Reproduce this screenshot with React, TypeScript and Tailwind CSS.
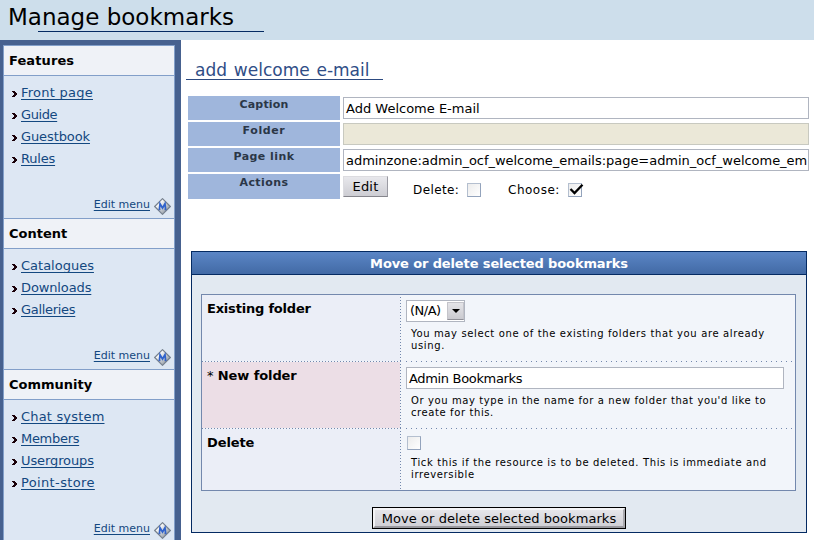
import React from "react";

function Chevron() {
  return (
    <svg width="6" height="6" viewBox="0 0 6 6" className="mt-[2px] shrink-0" shapeRendering="crispEdges">
      <path d="M0 0h3v1h1v1h1v2h-1v1h-1v1h-3v-1h1v-1h1v-2h-1v-1h-1z" fill="#1a0008" />
    </svg>
  );
}

function MenuBadge() {
  return (
    <svg width="17" height="17" viewBox="0 0 17 17" className="shrink-0">
      <defs>
        <linearGradient id="silver" x1="0" y1="0" x2="1" y2="1">
          <stop offset="0.25" stopColor="#ffffff" />
          <stop offset="0.75" stopColor="#a0a8b0" />
        </linearGradient>
      </defs>
      <path d="M8.5 0.7 16.3 8.5 8.5 16.3 0.7 8.5z" fill="url(#silver)" stroke="#76818e" strokeWidth="1.2" />
      <path d="M4.6 11.7H6.4M10.6 11.7H12.4" stroke="#2a56b8" strokeWidth="1" />
      <path d="M5.4 11.5 6 5.7 8.5 10 11 5.7 11.6 11.5" fill="none" stroke="#2f62cc" strokeWidth="1.7" />
    </svg>
  );
}

type MenuProps = { title: string; links: { label: string; track: string }[]; body: string; head: string };

function Menu({ title, links, body, head }: MenuProps) {
  return (
    <section>
      <h2 className={`flex h-[30px] items-center border-b border-[#829fc9] bg-[#eff2f7] pl-[5px] text-[13px] font-bold text-black ${head}`}>
        {title}
      </h2>
      <div className={`flex flex-col justify-between border-b border-[#829fc9] bg-[#dde7f3] ${body}`}>
        <ul className="flex flex-col pt-[6px] pl-2">
          {links.map((l) => (
            <li key={l.label} className="flex h-[22px] items-center gap-[3px]">
              <Chevron />
              <a className={`text-[13px] text-[#134880] underline underline-offset-2 ${l.track}`}>{l.label}</a>
            </li>
          ))}
        </ul>
        <div className="flex items-start justify-end gap-1 pr-[3px] pb-[3px]">
          <a className="text-[11px] leading-[14px] text-[#134880] underline underline-offset-2">Edit menu</a>
          <MenuBadge />
        </div>
      </div>
    </section>
  );
}

const field = "flex h-[22px] items-center overflow-hidden border px-[2px] text-[13px]";

function Check({ on = false }: { on?: boolean }) {
  return (
    <span className="flex h-[14px] w-[14px] shrink-0 border border-[#b4bfcf] border-r-[#93a3bc] border-b-[#93a3bc] bg-linear-to-br from-[#ececec] to-white">
      {on && (
        <svg width="15" height="12" viewBox="0 0 15 12" className="shrink-0">
          <path d="M1.5 5 5.5 9 13.5 0.8" fill="none" stroke="#000" strokeWidth="2.3" />
        </svg>
      )}
    </span>
  );
}

function Label({ children, track }: { children: React.ReactNode; track: string }) {
  return (
    <div className={`w-[152px] shrink-0 bg-[#9fb6dc] pt-[2px] text-center text-[11px] leading-[14px] font-bold text-[#2b3647] ${track}`}>
      {children}
    </div>
  );
}

function ColumnDots() {
  return <div className="mt-[2px] w-px shrink-0 bg-[repeating-linear-gradient(to_bottom,#7388ad_0px,#7388ad_1px,transparent_1px,transparent_3px)]" />;
}

function RowDots() {
  return (
    <div className="flex h-px shrink-0">
      <div className="w-[199px] bg-[repeating-linear-gradient(to_right,#7388ad_0px,#7388ad_1px,transparent_1px,transparent_3px)]" />
      <div className="mr-[3px] ml-[5px] flex-1 bg-[repeating-linear-gradient(to_right,#7388ad_0px,#7388ad_1px,transparent_1px,transparent_5px)]" />
    </div>
  );
}

const heading = "w-[198px] shrink-0 pt-[5px] pl-[5px] text-[13px] leading-[18px] font-bold";
const hint = "pl-[5px] text-[10px] leading-[12px]";

export default function App() {
  return (
    <div className="flex h-[540px] w-[814px] flex-col overflow-hidden bg-white font-['DejaVu_Sans',sans-serif] whitespace-nowrap text-black">
      <header className="h-10 shrink-0 bg-[#cddeeb]">
        <h1 className="pt-[3px] pl-2 text-[23px] leading-[28px]">Manage bookmarks</h1>
        <div className="ml-[38px] h-px w-[226px] bg-[#042a62]" />
      </header>
      <div className="flex min-h-0 flex-1">
        <aside className="w-[181px] shrink-0 overflow-hidden bg-[#46618f] pt-[5px] pl-[3px]">
          <div className="w-[172px] border border-b-0 border-[#829fc9]">
            <Menu
              title="Features"
              head="tracking-[0.1px]"
              body="h-[143px]"
              links={[
                { label: "Front page", track: "tracking-[0.25px]" },
                { label: "Guide", track: "tracking-[-0.4px]" },
                { label: "Guestbook", track: "tracking-[-0.1px]" },
                { label: "Rules", track: "tracking-[-0.2px]" },
              ]}
            />
            <Menu
              title="Content"
              head=""
              body="h-[121px]"
              links={[
                { label: "Catalogues", track: "" },
                { label: "Downloads", track: "tracking-[-0.12px]" },
                { label: "Galleries", track: "tracking-[-0.3px]" },
              ]}
            />
            <Menu
              title="Community"
              head=""
              body="h-[143px]"
              links={[
                { label: "Chat system", track: "tracking-[0.18px]" },
                { label: "Members", track: "tracking-[-0.3px]" },
                { label: "Usergroups", track: "tracking-[-0.1px]" },
                { label: "Point-store", track: "tracking-[0.36px]" },
              ]}
            />
          </div>
        </aside>
        <main className="min-w-0 flex-1 pl-[5px]">
          <h2 className="mt-5 h-5 w-[197px] border-b border-[#2c4a80] pl-[9px] text-[17px] leading-[21px] [word-spacing:1.4px] text-[#2f4d86]">add welcome e-mail</h2>
          <div className="mt-4 ml-[2px] flex w-[621px] flex-col gap-[2px]">
            <div className="flex h-6 gap-[3px]">
              <Label track="tracking-[0.2px]">Caption</Label>
              <div className={`${field} mt-px flex-1 border-[#b0b5c0] bg-white pt-px`}>Add Welcome E-mail</div>
            </div>
            <div className="flex h-6 gap-[3px]">
              <Label track="tracking-[0.6px]">Folder</Label>
              <div className={`${field} mt-px flex-1 border-[#c8c9c0] bg-[#ebe8d8]`} />
            </div>
            <div className="flex h-6 gap-[3px]">
              <Label track="tracking-[0.45px]">Page link</Label>
              <div className={`${field} mt-px flex-1 border-[#b0b5c0] bg-white pt-px tracking-[-0.03px]`}>adminzone:admin_ocf_welcome_emails:page=admin_ocf_welcome_em</div>
            </div>
            <div className="flex h-[25px] gap-[3px]">
              <Label track="tracking-[0.45px]">Actions</Label>
              <button className="mt-[2px] h-[21px] w-[45px] border border-[#dcdce0] border-r-[#9a9aa2] border-b-[#85858c] bg-linear-to-b from-[#e8e8ec] to-[#cdcdd3] text-[13px] leading-[18px] tracking-[0.2px]">Edit</button>
              <div className="flex h-[31px] items-center pl-[22px] text-[12px]">
                <span className="w-[54px] tracking-[0.4px]">Delete:</span>
                <Check />
                <span className="ml-[27px] w-[60px] tracking-[0.5px]">Choose:</span>
                <Check on />
              </div>
            </div>
          </div>
          <section className="mt-[52px] ml-[5px] h-[282px] w-[616px] border border-[#042a62] bg-[#e2e9f1]">
            <h3 className="h-[23px] border-b border-[#042a62] bg-linear-to-b from-[#5b86c6] to-[#426aa5] text-center text-[13px] leading-[23px] font-bold tracking-[-0.12px] text-white">
              Move or delete selected bookmarks
            </h3>
            <div className="mt-[19px] ml-[9px] flex h-[197px] w-[595px] flex-col border border-[#7388ad] bg-[#f2f5fa]">
              <div className="flex h-[66px]">
                <div className={`${heading} bg-[#ebeef7] tracking-[-0.2px]`}>Existing folder</div>
                <ColumnDots />
                <div className="pt-[5px] pl-[5px]">
                  <div className={`${field} w-[59px] justify-between border-[#b0b5c0] bg-white pr-0`}>
                    <span className="pl-px tracking-[-0.5px]">(N/A)</span>
                    <span className="flex h-[18px] w-[17px] items-center justify-center border border-[#c4c4ca] border-b-[#909098] bg-linear-to-b from-[#e4e4e8] to-[#cacad0]">
                      <svg width="8" height="4" viewBox="0 0 8 4"><path d="M0 0h8L4 4z" fill="#000" /></svg>
                    </span>
                  </div>
                  <p className={`${hint} pt-[6px] tracking-[0.63px]`}>You may select one of the existing folders that you are already<br />using.</p>
                </div>
              </div>
              <RowDots />
              <div className="flex h-[66px]">
                <div className={`${heading} bg-[#ecdee6] tracking-[-0.1px]`}><span className="font-normal">*</span> New folder</div>
                <ColumnDots />
                <div className="pt-[5px] pl-[5px]">
                  <div className={`${field} w-[378px] border-[#b0b5c0] bg-white pt-px tracking-[-0.33px]`}>Admin Bookmarks</div>
                  <p className={`${hint} pt-[6px] tracking-[0.6px]`}>Or you may type in the name for a new folder that you'd like to<br />create for this.</p>
                </div>
              </div>
              <RowDots />
              <div className="flex flex-1">
                <div className={`${heading} bg-[#ebeef7] tracking-[-0.1px]`}>Delete</div>
                <ColumnDots />
                <div className="pt-[7px] pl-[6px]">
                  <Check />
                  <p className={`${hint} -ml-px pt-[7px] tracking-[0.63px]`}>Tick this if the resource is to be deleted. This is immediate and<br />irreversible</p>
                </div>
              </div>
            </div>
            <button className="mt-4 ml-[180px] block h-[22px] w-[254px] border border-black bg-[#dcdbe0] text-[13px] tracking-[0.06px]">
              <span className="block h-full border-2 border-[#f4f4f6] border-r-[#a9a9ae] border-b-[#98989e] bg-linear-to-b from-[#e6e6ea] to-[#d0d0d6] leading-[17px]">Move or delete selected bookmarks</span>
            </button>
          </section>
        </main>
      </div>
    </div>
  );
}
